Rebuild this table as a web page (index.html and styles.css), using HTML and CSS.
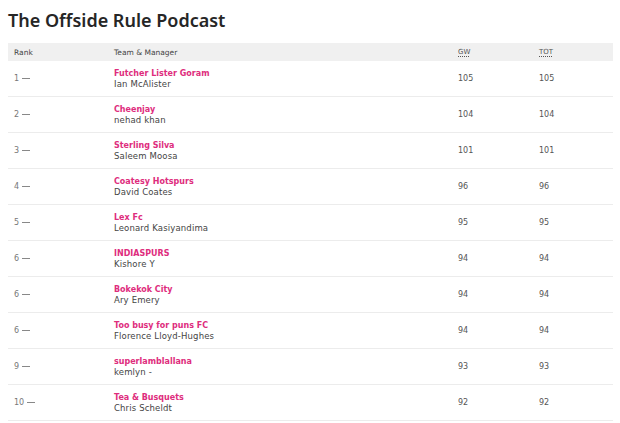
FILE: index.html
```html
<!DOCTYPE html>
<html>
<head>
<meta charset="utf-8">
<link rel="stylesheet" href="styles.css">
</head>
<body>
<h1 class="title">The Offside Rule Podcast</h1>
<div class="table">
  <div class="row head">
    <div class="cell">Rank</div>
    <div class="cell">Team &amp; Manager</div>
    <div class="cell num"><abbr class="abbr">GW</abbr></div>
    <div class="cell num"><abbr class="abbr">TOT</abbr></div>
  </div>
  <div class="row"><div class="cell rank">1 <span class="dash"></span></div><div class="cell team"><span class="tname">Futcher Lister Goram</span><span class="mgr">Ian McAlister</span></div><div class="cell num">105</div><div class="cell num">105</div></div>
  <div class="row"><div class="cell rank">2 <span class="dash"></span></div><div class="cell team"><span class="tname">Cheenjay</span><span class="mgr">nehad khan</span></div><div class="cell num">104</div><div class="cell num">104</div></div>
  <div class="row"><div class="cell rank">3 <span class="dash"></span></div><div class="cell team"><span class="tname">Sterling Silva</span><span class="mgr">Saleem Moosa</span></div><div class="cell num">101</div><div class="cell num">101</div></div>
  <div class="row"><div class="cell rank">4 <span class="dash"></span></div><div class="cell team"><span class="tname">Coatesy Hotspurs</span><span class="mgr">David Coates</span></div><div class="cell num">96</div><div class="cell num">96</div></div>
  <div class="row"><div class="cell rank">5 <span class="dash"></span></div><div class="cell team"><span class="tname">Lex Fc</span><span class="mgr">Leonard Kasiyandima</span></div><div class="cell num">95</div><div class="cell num">95</div></div>
  <div class="row"><div class="cell rank">6 <span class="dash"></span></div><div class="cell team"><span class="tname">INDIASPURS</span><span class="mgr">Kishore Y</span></div><div class="cell num">94</div><div class="cell num">94</div></div>
  <div class="row"><div class="cell rank">6 <span class="dash"></span></div><div class="cell team"><span class="tname">Bokekok City</span><span class="mgr">Ary Emery</span></div><div class="cell num">94</div><div class="cell num">94</div></div>
  <div class="row"><div class="cell rank">6 <span class="dash"></span></div><div class="cell team"><span class="tname">Too busy for puns FC</span><span class="mgr">Florence Lloyd-Hughes</span></div><div class="cell num">94</div><div class="cell num">94</div></div>
  <div class="row"><div class="cell rank">9 <span class="dash"></span></div><div class="cell team"><span class="tname">superlamblallana</span><span class="mgr">kemlyn -</span></div><div class="cell num">93</div><div class="cell num">93</div></div>
  <div class="row"><div class="cell rank">10 <span class="dash"></span></div><div class="cell team"><span class="tname">Tea &amp; Busquets</span><span class="mgr">Chris Scheldt</span></div><div class="cell num">92</div><div class="cell num">92</div></div>
</div>
</body>
</html>
```
FILE: styles.css
```css
html, body { margin: 0; padding: 0; background: #fff; }
body { padding: 8px; font-family: "DejaVu Sans", sans-serif; color: #333; }
.title {
  margin: 0 0 13px 0;
  font-family: "Noto Sans", sans-serif;
  font-weight: 600;
  font-size: 18px;
  line-height: 20px;
  color: #262626;
  padding-top: 2px;
}
.table { width: 605px; }
.row {
  display: grid;
  grid-template-columns: 100px 344px 81px 1fr;
  align-items: center;
  height: 35px;
  border-bottom: 1px solid #ececec;
}
.row.head {
  height: 18px;
  background: #f0f0f0;
  border-bottom: none;
  font-size: 7.5px;
  color: #444;
}
.cell { padding-left: 6px; }
.rank { font-size: 8px; color: #777; display: flex; align-items: center; gap: 3px; }
.dash { display: inline-block; width: 8px; height: 1.5px; background: #888; }
.team { display: flex; flex-direction: column; font-size: 8.5px; line-height: 11px; }
.tname { color: #de2d7d; font-weight: 700; font-size: 8px; }
.mgr { color: #444; letter-spacing: 0.15px; }
.num { font-size: 8px; color: #555; }
.head .num { font-size: 7px; }
.abbr { text-decoration: underline dotted; text-underline-offset: 2px; }
```
